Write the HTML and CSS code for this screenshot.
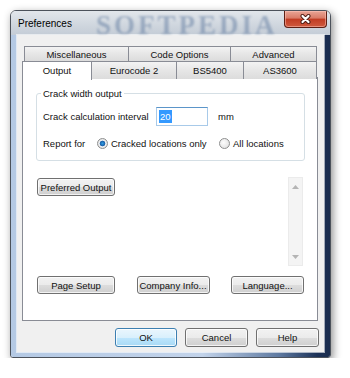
FILE: index.html
```html
<!DOCTYPE html>
<html lang="en">
<head>
  <meta charset="UTF-8">
  <meta name="viewport" content="width=device-width, initial-scale=1.0">
  <title>Preferences</title>
  <link rel="stylesheet" href="styles.css">
</head>
<body>

  <div class="window">
    <div class="titlebar">
      <span class="title">Preferences</span>
      <span class="watermark">SOFTPEDIA</span>
      <button class="close" title="Close">
        <svg width="13" height="10" viewBox="0 0 13 10">
          <path d="M3.5 2 L9.5 8 M9.5 2 L3.5 8" stroke="#4a1a12" stroke-width="4" stroke-linecap="round"/>
          <path d="M3.5 2 L9.5 8 M9.5 2 L3.5 8" stroke="#fff" stroke-width="2.2" stroke-linecap="round"/>
        </svg>
      </button>
    </div>

    <div class="frame">
      <div class="client">

        <!-- Onglets sur deux rangées -->
        <div class="tabs">
          <div class="tab-row back">
            <div class="tab">Miscellaneous</div>
            <div class="tab">Code Options</div>
            <div class="tab">Advanced</div>
          </div>
          <div class="tab-row front">
            <div class="tab selected">Output</div>
            <div class="tab">Eurocode 2</div>
            <div class="tab">BS5400</div>
            <div class="tab">AS3600</div>
          </div>
        </div>

        <div class="panel">
          <div class="group">
            <div class="group-title">Crack width output</div>
            <div class="field-row first">
              <span class="field-label">Crack calculation interval</span>
              <div class="textbox"><span class="selected-text">20</span></div>
              <span class="unit">mm</span>
            </div>
            <div class="field-row">
              <span class="field-label short">Report for</span>
              <label class="option wide"><input type="radio" name="report" checked> Cracked locations only</label>
              <label class="option"><input type="radio" name="report"> All locations</label>
            </div>
          </div>

          <div class="output-area">
            <button class="btn preferred">Preferred Output</button>
            <div class="scrollbar">
              <svg width="7" height="4" viewBox="0 0 7 4"><path d="M0 4 L3.5 0 L7 4 Z" fill="#b4b4b4"/></svg>
              <svg width="7" height="4" viewBox="0 0 7 4"><path d="M0 0 L3.5 4 L7 0 Z" fill="#b4b4b4"/></svg>
            </div>
          </div>

          <div class="panel-buttons">
            <button class="btn setup">Page Setup</button>
            <button class="btn small">Company Info...</button>
            <button class="btn small">Language...</button>
          </div>
        </div>

        <div class="actions">
          <button class="btn action default">OK</button>
          <button class="btn action">Cancel</button>
          <button class="btn action">Help</button>
        </div>

      </div>
    </div>
  </div>

</body>
</html>
```

FILE: styles.css
```css
* {
    box-sizing: border-box;
}
body {
    margin: 0;
    background: #fff;
    font-family: 'Liberation Sans', Arial, sans-serif;
    font-size: 9.5px;
    color: #111;
}
.window {
    margin: 10px 0 0 10px;
    width: 321px;
    height: 348px;
    border: 1px solid #4c525b;
    border-radius: 6px 6px 3px 3px;
    overflow: hidden;
    box-shadow: 2px 3px 8px rgba(0, 0, 0, 0.45);
}
.titlebar {
    height: 24px;
    display: flex;
    align-items: center;
    padding-left: 7px;
    background: linear-gradient(to bottom, #e2e6eb, #cfd6de 60%, #c4ccd6);
}
.title {
    font-size: 10px;
    color: #000;
    margin-top: 1px;
}
.watermark {
    margin-left: 24px;
    font-family: 'Liberation Serif', serif;
    font-weight: bold;
    font-size: 27px;
    line-height: 24px;
    letter-spacing: 3px;
    margin-top: 3px;
    color: rgba(100, 126, 162, 0.5);
    filter: blur(0.8px);
    white-space: nowrap;
}
.close {
    margin-left: auto;
    margin-right: 3px;
    align-self: flex-start;
    width: 43px;
    height: 17px;
    padding: 0;
    border: 1px solid #5e1f14;
    border-top: none;
    border-radius: 0 0 4px 4px;
    background: linear-gradient(to bottom, #e9a596, #d97a66 45%, #c13b22 50%, #cf5a3e 100%);
    box-shadow: inset 0 0 0 1px rgba(255, 200, 190, 0.5);
    display: flex;
    align-items: center;
    justify-content: center;
}
.frame {
    padding: 0 6px 5px;
    background: linear-gradient(to right, #b4c9e4, #c2d3ea 60%, #5f7aa1 84%, #1c3157 96%, #1a2c4e);
}
.client {
    height: 317px;
    background: #f0f0f0;
    padding: 11px 6px 0 5px;
    box-shadow: 0 0 0 1px rgba(255, 255, 255, 0.6);
}

/* onglets */
.tab-row {
    display: grid;
}
.tab-row.back {
    margin-left: 2px;
    height: 15px;
    grid-template-columns: 105px 102px 86px;
}
.tab-row.front {
    height: 16px;
    grid-template-columns: 70px 85px 67px 73px;
    align-items: end;
}
.tab {
    height: 100%;
    display: flex;
    align-items: center;
    justify-content: center;
    border-top: 1px solid #898c95;
    border-right: 1px solid #898c95;
    background: linear-gradient(to bottom, #f3f3f3, #e6e6e6 50%, #dcdcdc);
    color: #111;
}
.tab:first-child {
    border-left: 1px solid #898c95;
}
.tab.selected {
    position: relative;
    z-index: 1;
    height: 19px;
    margin-bottom: -1px;
    background: #fff;
    padding-bottom: 2px;
}
.panel {
    height: 244px;
    background: #fff;
    border: 1px solid #898c95;
    padding: 15px 12px 0 13px;
}

/* cadre de groupe */
.group {
    height: 68px;
    border: 1px solid #d5dfe5;
    border-radius: 3px;
    padding: 0 6px;
}
.group-title {
    width: fit-content;
    margin: -6px 0 0 -2px;
    padding: 0 2px;
    line-height: 12px;
    background: #fff;
}
.field-row {
    display: flex;
    align-items: center;
    height: 14px;
    margin-top: 10px;
}
.field-row.first {
    height: 19px;
    margin-top: 7px;
}
.field-label {
    width: 113px;
}
.field-label.short {
    width: 54px;
}
.textbox {
    width: 52px;
    height: 19px;
    border: 1px solid #a8cae9;
    border-top-color: #5b95c9;
    padding: 2px 0 0 2px;
    background: #fff;
}
.selected-text {
    display: inline-block;
    background: #3399ff;
    color: #fff;
    line-height: 13px;
    padding: 0 1px;
}
.unit {
    margin-left: 10px;
}
.option {
    display: flex;
    align-items: center;
    gap: 3px;
}
.option.wide {
    width: 122px;
}
.option input {
    appearance: none;
    margin: 0;
    width: 11px;
    height: 11px;
    border: 1px solid #8e8f8f;
    border-radius: 50%;
    background: radial-gradient(circle at 40% 40%, #fdfdfd, #dcdcdc);
}
.option input:checked {
    background: radial-gradient(circle, #2f9de2 0, #1a5fa8 2.5px, #f4f4f4 3.2px, #dcdcdc 5px);
}

/* zone de sortie */
.output-area {
    display: flex;
    justify-content: space-between;
    height: 89px;
    margin-top: 16px;
}
.scrollbar {
    width: 15px;
    margin-right: 2px;
    background: #f4f4f4;
    border: 1px solid #ebebeb;
    display: flex;
    flex-direction: column;
    align-items: center;
    justify-content: space-between;
    padding: 7px 0 6px;
}
.panel-buttons {
    display: flex;
    justify-content: space-between;
    margin-top: 10px;
    padding: 0 1px;
}
.actions {
    display: flex;
    justify-content: flex-end;
    gap: 8px;
    margin: 7px -1px 0 0;
}

/* boutons */
.btn {
    height: 18px;
    padding: 0;
    border: 1px solid #707070;
    border-radius: 3px;
    background: linear-gradient(to bottom, #f2f2f2, #ebebeb 50%, #dddddd 50%, #cfcfcf);
    box-shadow: inset 0 0 0 1px rgba(255, 255, 255, 0.75);
    font-family: 'Liberation Sans', Arial, sans-serif;
    font-size: 9.5px;
    color: #111;
}
.btn.preferred {
    width: 78px;
    margin: 1px 0 0 1px;
}
.btn.setup {
    width: 78px;
}
.btn.small {
    width: 73px;
}
.btn.action {
    width: 63px;
    height: 19px;
}
.btn.default {
    width: 62px;
    border-color: #3c7fb1;
    background: linear-gradient(to bottom, #eaf6fd, #d9f0fc 50%, #bee6fd 50%, #a7d9f5);
    box-shadow: inset 0 0 0 1px rgba(255, 255, 255, 0.8);
}
```
